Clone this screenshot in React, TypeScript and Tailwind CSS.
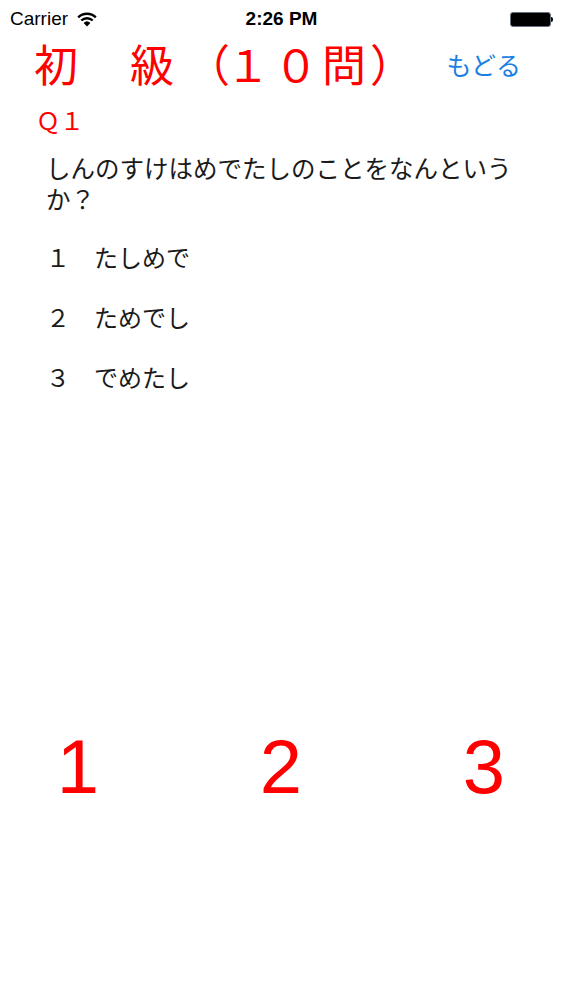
const jp = { fontFamily: '"Noto Sans CJK JP", "Liberation Sans", sans-serif' }
const latin = { fontFamily: '"Liberation Sans", Arial, sans-serif' }

function WifiIcon() {
  return (
    <svg width="22" height="16" viewBox="0 0 22 16" className="ml-2">
      <path d="M11 15.5 L7.6 11.9 A5 5 0 0 1 14.4 11.9 Z" fill="#000" />
      <path d="M5.3 9.5 A8.2 8.2 0 0 1 16.7 9.5" stroke="#000" strokeWidth="2.4" fill="none" />
      <path d="M2.2 6.3 A12.6 12.6 0 0 1 19.8 6.3" stroke="#000" strokeWidth="2.4" fill="none" />
    </svg>
  )
}

function Battery() {
  return (
    <div className="flex items-center">
      <div className="w-[41px] h-[15px] rounded-[3px] border border-gray-500 bg-black p-[1px]">
        <div className="w-full h-full rounded-[2px] bg-black" />
      </div>
      <div className="w-[2px] h-[5px] bg-black rounded-r-sm" />
    </div>
  )
}

const options = [
  { no: '１', text: 'たしめで' },
  { no: '２', text: 'ためでし' },
  { no: '３', text: 'でめたし' },
]

// title is set on a 48px pitch; the gap after 初 is one empty cell
const titleChars = [
  { c: '初', cls: '' },
  { c: '級', cls: 'ml-[48px]' },
  { c: '（', cls: 'translate-x-[8px]' },
  { c: '１', cls: '' },
  { c: '０', cls: '' },
  { c: '問', cls: '' },
  { c: '）', cls: '' },
]

export default function App() {
  return (
    <div className="w-[563px] h-[1000px] bg-white flex flex-col">
      {/* status bar */}
      <div className="h-[38px] px-[10px] flex items-center justify-between text-black" style={latin}>
        <div className="flex items-center w-[140px] text-[19px]">
          Carrier
          <WifiIcon />
        </div>
        <div className="text-[19px] font-bold">2:26 PM</div>
        <div className="w-[140px] flex justify-end">
          <Battery />
        </div>
      </div>

      {/* title */}
      <div className="flex items-center pl-[32px] pr-[42px] h-[50px]" style={jp}>
        <div className="flex text-[44px] leading-none text-[#ff0000]">
          {titleChars.map((t, i) => (
            <span key={i} className={`inline-block w-[48px] text-center ${t.cls}`}>
              {t.c}
            </span>
          ))}
        </div>
        <button className="ml-auto text-[25px] leading-none text-[#1b7fe3] mt-[2px]">もどる</button>
      </div>

      <div className="pl-[36px] mt-[20px] text-[24px] leading-none text-[#ff0000]" style={jp}>Ｑ１</div>

      <div className="pl-[46px] pr-[30px] mt-[20px] text-[24.5px] leading-[31px] text-[#1a1a1a]" style={jp}>
        しんのすけはめでたしのことをなんというか？
      </div>

      <div className="pl-[46px] mt-[30px] flex flex-col gap-[34px] text-[24px] leading-[26px] text-[#1a1a1a]" style={jp}>
        {options.map((o) => (
          <div key={o.no}>
            {o.no}　{o.text}
          </div>
        ))}
      </div>

      {/* answer buttons */}
      <div className="mt-[339px] flex pl-[28px] gap-[103px]" style={latin}>
        {['1', '2', '3'].map((n) => (
          <button key={n} className="w-[100px] text-[76px] leading-none text-[#ff0000]">
            {n}
          </button>
        ))}
      </div>
    </div>
  )
}
